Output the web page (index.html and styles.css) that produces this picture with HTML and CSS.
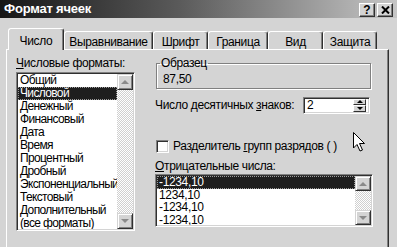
FILE: index.html
```html
<!DOCTYPE html>
<html lang="ru">
<head>
<meta charset="utf-8">
<title>Формат ячеек</title>
<link rel="stylesheet" href="styles.css">
</head>
<body>
<div class="win">
  <div class="titlebar">
    <span class="title">Формат ячеек</span>
    <div class="tbtns">
      <span class="tbtn">?</span>
      <span class="tbtn"><svg width="9" height="8" viewBox="0 0 9 8"><path d="M1 0.5 L8 7.5 M8 0.5 L1 7.5" stroke="#000" stroke-width="2" fill="none"/></svg></span>
    </div>
  </div>
  <div class="tabs">
    <div class="tab active w-num">Число</div>
    <div class="tab w-align">Выравнивание</div>
    <div class="tab w-font">Шрифт</div>
    <div class="tab w-border">Граница</div>
    <div class="tab w-view">Вид</div>
    <div class="tab w-prot">Защита</div>
  </div>
  <div class="panel">
    <div class="col-left">
      <div class="label"><u>Ч</u>исловые форматы:</div>
      <div class="listbox lb1">
        <ul class="items">
          <li>Общий</li>
          <li class="sel">Числовой</li>
          <li>Денежный</li>
          <li>Финансовый</li>
          <li>Дата</li>
          <li>Время</li>
          <li>Процентный</li>
          <li>Дробный</li>
          <li>Экспоненциальный</li>
          <li>Текстовый</li>
          <li>Дополнительный</li>
          <li>(все форматы)</li>
        </ul>
        <div class="vscroll">
          <span class="sbtn"><span class="tri up"></span></span>
          <span class="track"></span>
          <span class="sbtn"><span class="tri down"></span></span>
        </div>
      </div>
    </div>
    <div class="col-right">
      <fieldset class="group">
        <legend>Образец</legend>
        <div class="sample">87,50</div>
      </fieldset>
      <div class="spinrow">
        <span>Число десятичных <u>з</u>наков:</span>
        <div class="spin">
          <span class="spinval">2</span>
          <div class="spinbtns">
            <span class="spbtn"><span class="tri sm up dark"></span></span>
            <span class="spbtn"><span class="tri sm down dark"></span></span>
          </div>
        </div>
      </div>
      <div class="checkrow">
        <span class="cbox"></span>
        <span>Разделитель <u>г</u>рупп разрядов ( )</span>
      </div>
      <div class="label neg"><u>О</u>трицательные числа:</div>
      <div class="listbox lb2">
        <ul class="items">
          <li class="sel">-1234,10</li>
          <li>1234,10</li>
          <li>-1234,10</li>
          <li>-1234,10</li>
        </ul>
        <div class="vscroll">
          <span class="sbtn"><span class="tri up"></span></span>
          <span class="track"></span>
          <span class="sbtn"><span class="tri down"></span></span>
        </div>
      </div>
    </div>
  </div>
  <svg class="cursor" width="14" height="22" viewBox="0 0 14 22">
    <path d="M1.5 1.5 L1.5 17 L5 13.5 L8 20 L10.5 19 L7.5 12.5 L12.5 12.5 Z" fill="#fff" stroke="#000" stroke-width="1" stroke-linejoin="miter"/>
  </svg>
</div>
</body>
</html>
```
FILE: styles.css
```css
* { box-sizing: border-box; }
html, body { margin: 0; padding: 0; }
body {
  width: 397px;
  height: 247px;
  overflow: hidden;
  background: #d4d4d4;
  font-family: "Liberation Sans", Arial, sans-serif;
  font-size: 12px;
  letter-spacing: -0.35px;
  color: #000;
}
u { text-decoration: underline; text-underline-offset: 1px; }
.win { position: relative; width: 397px; height: 247px; overflow: hidden; }

.titlebar {
  height: 18px;
  background: linear-gradient(to right, #161616 0%, #5a5a5a 45%, #c6c6c6 100%);
  display: flex;
  justify-content: space-between;
  padding: 0 4px 0 4px;
}
.title { color: #fff; font-weight: bold; font-size: 13px; line-height: 18px; letter-spacing: -0.2px; }
.tbtns { display: flex; gap: 2px; margin-top: 3px; }
.tbtn {
  width: 16px; height: 14px;
  background: #d4d4d4;
  border: 1px solid;
  border-color: #fff #303030 #303030 #fff;
  box-shadow: inset -1px -1px #808080;
  font-weight: bold; font-size: 12px; line-height: 12px; letter-spacing: 0;
  display: flex; align-items: center; justify-content: center;
}

.tabs {
  display: flex;
  align-items: flex-end;
  height: 32px;
  padding-left: 8px;
  position: relative;
  z-index: 2;
}
.tab {
  height: 18px;
  margin-bottom: 1px;
  border: 1px solid;
  border-bottom: none;
  border-color: #fff #303030 transparent #fff;
  box-shadow: inset -1px 0 #808080;
  border-radius: 3px 3px 0 0;
  text-align: center;
  line-height: 14px;
  padding-top: 3px;
  background: #d4d4d4;
}
.tab.active { height: 22px; margin-bottom: 0; padding-top: 5px; }
.w-num { width: 56px; }
.w-align { width: 89px; }
.w-font { width: 55px; }
.w-border { width: 60px; }
.w-view { width: 55px; }
.w-prot { width: 54px; }

.panel {
  margin-top: -1px;
  margin-left: 6px;
  width: 383px;
  height: 220px;
  border: 1px solid;
  border-color: #fff #303030 #303030 #fff;
  box-shadow: inset -1px -1px #808080;
  padding: 6px 0 0 9px;
  display: flex;
  gap: 20px;
}
.col-left { width: 119px; }
.col-right { width: 218px; display: flex; flex-direction: column; }
.label { line-height: 14px; height: 14px; white-space: nowrap; }

.listbox {
  display: flex;
  background: #fff;
  border: 1px solid;
  border-color: #808080 #fff #fff #808080;
  box-shadow: inset 1px 1px #303030, inset -1px -1px #d4d4d4;
  padding: 1px;
  overflow: hidden;
}
.lb1 { margin-top: 2px; height: 159px; }
.lb2 { margin-top: 1px; height: 53px; }
.items { list-style: none; margin: 0; padding: 0; flex: 1; min-width: 0; overflow: hidden; }
.items li { line-height: 13px; height: 13px; padding-left: 2px; white-space: nowrap; letter-spacing: -0.65px; }
.lb2 .items li { height: 12.5px; line-height: 12.5px; letter-spacing: -0.35px; }
.items li.sel { background: #1e1e1e; color: #fff; outline: 1px dotted #9a9a9a; outline-offset: -1px; }

.vscroll { width: 16px; display: flex; flex-direction: column; }
.sbtn {
  width: 16px; height: 16px; flex: none;
  background: #d4d4d4;
  border: 1px solid;
  border-color: #d4d4d4 #303030 #303030 #d4d4d4;
  box-shadow: inset 1px 1px #fff, inset -1px -1px #808080;
  display: flex; align-items: center; justify-content: center;
}
.lb2 .sbtn { height: 15px; }
.track {
  flex: 1;
  background: repeating-conic-gradient(#fff 0 25%, #d0d0d0 0 50%) 0 0 / 2px 2px;
}
.tri { width: 0; height: 0; border-left: 4px solid transparent; border-right: 4px solid transparent; }
.tri.up { border-bottom: 4px solid #8a8a8a; }
.tri.down { border-top: 4px solid #8a8a8a; }
.tri.sm { border-left-width: 3px; border-right-width: 3px; }
.tri.sm.up { border-bottom-width: 3px; }
.tri.sm.down { border-top-width: 3px; }
.tri.dark.up { border-bottom-color: #000; }
.tri.dark.down { border-top-color: #000; }

.group {
  margin: 0 0 0 1px;
  width: 215px;
  border: 1px solid #808080;
  box-shadow: 1px 1px #fff, inset 1px 1px #fff;
  padding: 2px 0 2px 3px;
  min-width: 0;
}
.group legend { padding: 0 1px; line-height: 14px; }
.sample { line-height: 14px; padding-left: 3px; }

.spinrow {
  margin-top: 8px;
  height: 16px;
  display: flex;
  align-items: center;
  justify-content: space-between;
  padding-right: 3px;
}
.spin {
  width: 67px; height: 17px;
  background: #fff;
  border: 1px solid;
  border-color: #808080 #fff #fff #808080;
  box-shadow: inset 1px 1px #303030, inset -1px -1px #d4d4d4;
  padding: 1px 3px 1px 2px;
  display: flex; align-items: stretch; justify-content: space-between;
}
.spinval { line-height: 13px; padding-left: 1px; }
.spinbtns { width: 13px; display: flex; flex-direction: column; }
.spbtn {
  flex: 1;
  background: #d4d4d4;
  border: 1px solid;
  border-color: #fff #303030 #303030 #fff;
  display: flex; align-items: center; justify-content: center;
}

.checkrow {
  margin-top: 26px;
  height: 14px;
  display: flex;
  align-items: center;
  gap: 4px;
  padding-left: 1px;
}
.cbox {
  width: 13px; height: 13px;
  background: #fff;
  border: 1px solid;
  border-color: #808080 #fff #fff #808080;
  box-shadow: inset 1px 1px #303030, inset -1px -1px #d4d4d4;
}
.neg { margin-top: 6px; }

.cursor { position: absolute; left: 352px; top: 131px; }
```
